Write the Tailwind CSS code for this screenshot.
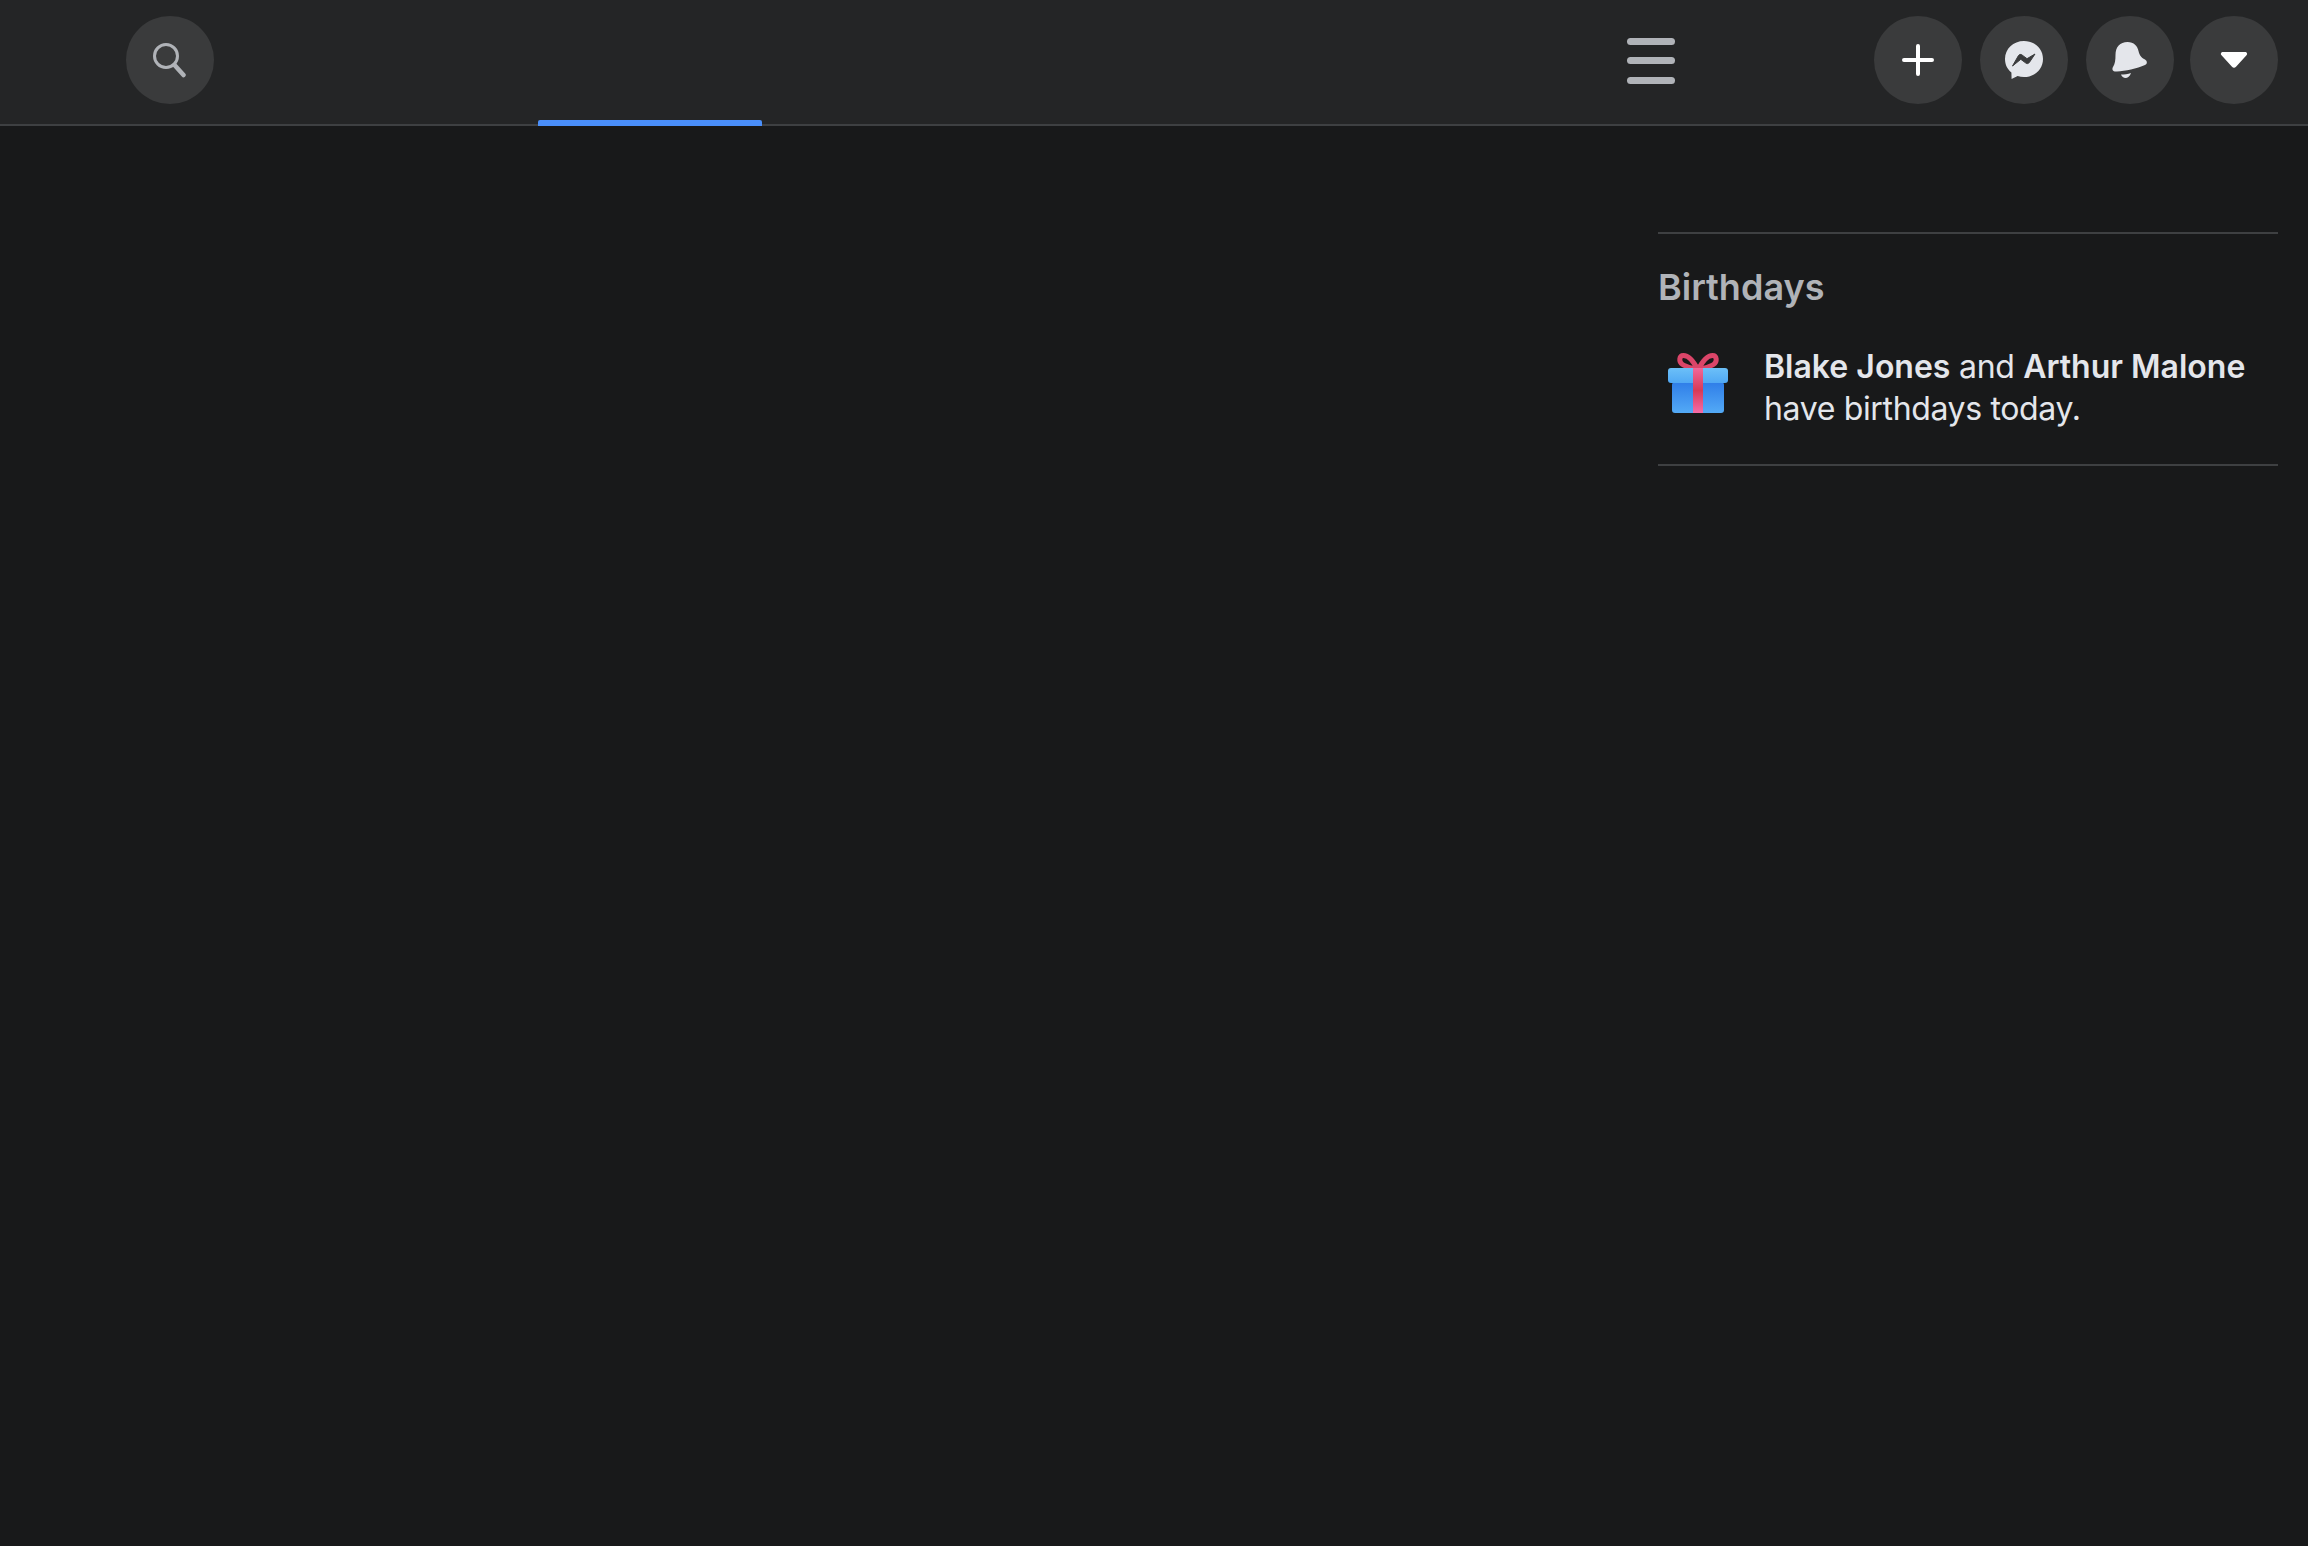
<!DOCTYPE html>
<html lang="en">
<head>
    <meta charset="UTF-8">
    <title>Birthdays</title>
    <script src="https://cdn.jsdelivr.net/npm/@tailwindcss/browser@4"></script>
</head>

<body class="h-[1546px] overflow-hidden bg-[#18191a] font-[Inter,sans-serif]">
    <!-- Top bar -->
    <header class="flex h-[126px] items-center border-b-2 border-[#3e4042] bg-[#242526] pb-[4px] pl-[126px] pr-[30px]">
        <button class="flex h-[88px] w-[88px] items-center justify-center rounded-full bg-[#3a3b3c]">
            <svg class="h-[36px] w-[36px]" viewBox="0 0 36 36" fill="none" stroke="#b0b3b8">
                <circle cx="14" cy="14" r="11.5" stroke-width="3" />
                <path d="M22.5 23 L31.5 33" stroke-width="4.5" stroke-linecap="round" />
            </svg>
        </button>

        <!-- Active tab -->
        <div class="ml-[324px] h-[126px] w-[224px] self-start">
            <div class="mt-[120px] h-[6px] rounded-t-[2px] bg-[#4a8ffa]"></div>
        </div>

        <button class="ml-[865px] mt-[1px] flex w-[48px] flex-col gap-[12.5px]">
            <span class="h-[7px] w-full rounded-full bg-[#b0b3b8]"></span>
            <span class="h-[7px] w-full rounded-full bg-[#b0b3b8]"></span>
            <span class="h-[7px] w-full rounded-full bg-[#b0b3b8]"></span>
        </button>

        <div class="ml-auto flex items-center">
            <button class="flex h-[88px] w-[88px] items-center justify-center rounded-full bg-[#3a3b3c]">
                <svg class="h-[32px] w-[32px]" viewBox="0 0 32 32" fill="none" stroke="#fff" stroke-width="4" stroke-linecap="round">
                    <path d="M16 2 V30 M2 16 H30" />
                </svg>
            </button>
            <button class="ml-[18px] flex h-[88px] w-[88px] items-center justify-center rounded-full bg-[#3a3b3c]">
                <svg class="h-[40px] w-[40px]" viewBox="0 0 40 40">
                    <path fill="#e4e6eb" d="M20 1 C9.2 1 1 8.8 1 19 C1 24.6 3.4 29.3 7.4 32.5 L7.6 39 L13.6 36 C15.6 36.6 17.700 37 20 37 C30.800 37 39 29.200 39 19 C39 8.800 30.800 1 20 1 Z" />
                    <path fill="#3a3b3c" stroke="#3a3b3c" stroke-width="1" stroke-linejoin="round" d="M8.500 26 L14.500 15.500 C15.300 14.300 16.800 14.100 17.900 14.900 L23 18.700 L31 14 L25.300 22.500 C24.500 23.700 23 24 21.900 23.100 L16.800 19.300 Z" />
                </svg>
            </button>
            <button class="ml-[18px] flex h-[88px] w-[88px] items-center justify-center rounded-full bg-[#3a3b3c]">
                <svg class="h-[40px] w-[40px]" viewBox="0 0 40 40">
                    <path fill="#e4e6eb" d="M17.500 2 C24 2 27.500 6 28.500 11 C29.500 15 31 17.500 35 19.500 C37.500 21 37.500 24 35 25 C27 28.500 15 31 7 31.500 C3 32 1.500 29.500 3 27 C5 24 5.500 20 5.500 15 C5.500 7 10 2 17.500 2 Z" />
                    <path fill="#e4e6eb" d="M11 34.500 C14 34.500 18 34 21 33 C20 36.500 17.500 38 15.500 38 C13.500 38 11.800 36.500 11 34.500 Z" />
                </svg>
            </button>
            <button class="ml-[16px] flex h-[88px] w-[88px] items-center justify-center rounded-full bg-[#3a3b3c]">
                <svg class="h-[18px] w-[28px]" viewBox="0 0 28 18">
                    <path fill="#fff" d="M3 1 H25 C27 1 27.800 3 26.500 4.300 L16 15.800 C14.800 17.100 13.200 17.100 12 15.800 L1.500 4.300 C0.200 3 1 1 3 1 Z" />
                </svg>
            </button>
        </div>
    </header>

    <!-- Birthdays panel -->
    <aside class="ml-auto mr-[30px] mt-[106px] w-[620px] border-y-2 border-[#3e4042] pb-[34px] pt-[28px]">
        <h2 class="text-[36px] font-semibold leading-[50px] text-[#b0b3b8]">Birthdays</h2>
        <div class="mt-[34px] flex items-start">
            <svg class="ml-[8px] mt-[4px] h-[64px] w-[64px] shrink-0" viewBox="0 0 64 64">
                <defs>
                    <linearGradient id="lid" x1="0" y1="0" x2="0" y2="1">
                        <stop offset="0" stop-color="#6cc0f8" />
                        <stop offset="1" stop-color="#50a8f4" />
                    </linearGradient>
                    <linearGradient id="box" x1="0" y1="0" x2="0" y2="1">
                        <stop offset="0" stop-color="#2f7de8" />
                        <stop offset="1" stop-color="#53aaf6" />
                    </linearGradient>
                    <linearGradient id="ribbon" x1="0" y1="0" x2="0" y2="1">
                        <stop offset="0" stop-color="#f0689a" />
                        <stop offset="0.5" stop-color="#d83a56" />
                        <stop offset="1" stop-color="#f56ca8" />
                    </linearGradient>
                </defs>
                <path d="M32 20 C27 10 22 5.500 17.500 5.500 C13 5.500 12.500 12 16.500 14.500 C21 17.300 27 18 32 20 Z M32 20 C37 10 42 5.500 46.500 5.500 C51 5.500 51.500 12 47.500 14.500 C43 17.300 37 18 32 20 Z" fill="#18191a" stroke="#db4569" stroke-width="5" stroke-linejoin="round" />
                <rect x="6" y="32" width="52" height="31" rx="3" fill="url(#box)" />
                <rect x="2" y="18" width="60" height="15" rx="3" fill="url(#lid)" />
                <rect x="27" y="18" width="10" height="45" fill="url(#ribbon)" />
            </svg>
            <p class="ml-[34px] text-[32px] leading-[42px] tracking-[-0.35px] text-[#e4e6eb]">
                <span class="font-semibold tracking-normal">Blake Jones</span> and <span class="font-semibold tracking-normal">Arthur Malone</span><br>have birthdays today.
            </p>
        </div>
    </aside>
</body>
</html>
